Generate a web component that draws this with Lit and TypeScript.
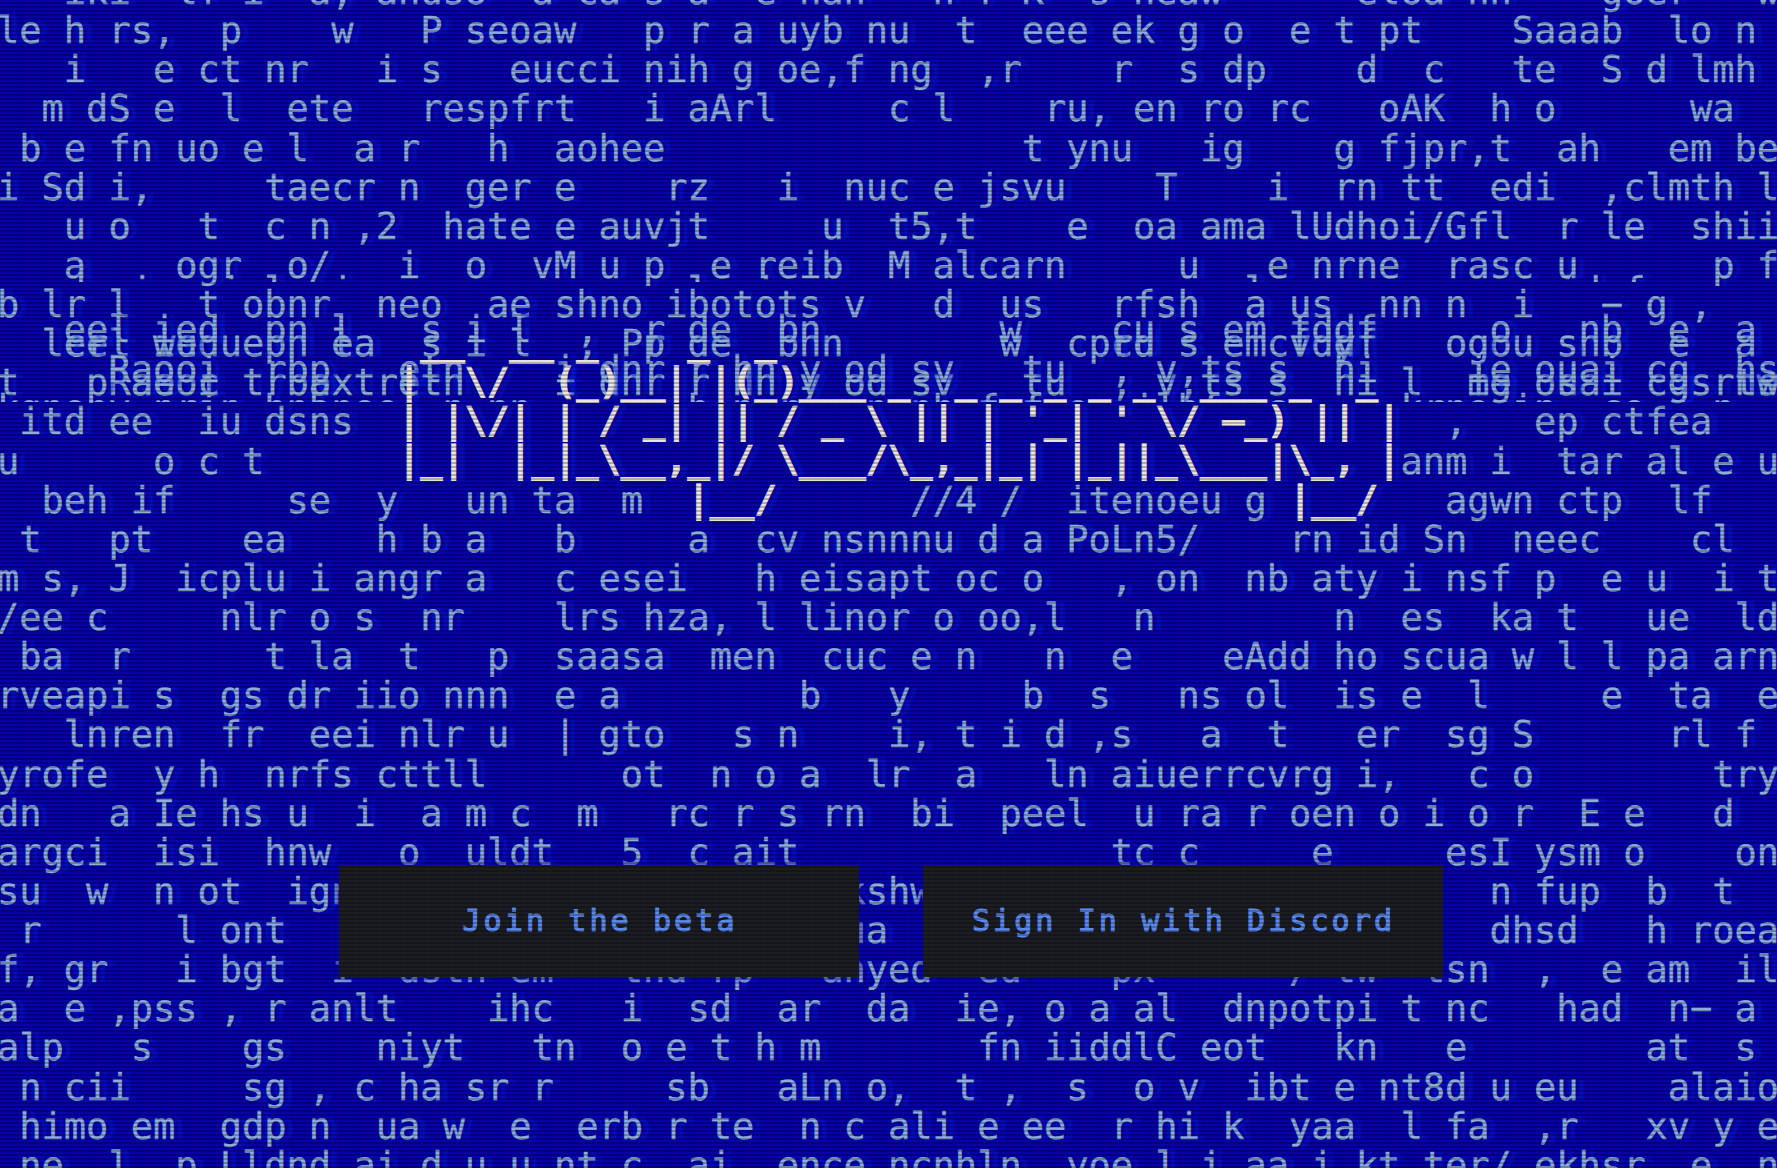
import { LitElement, html, css } from "lit";
import { customElement, property } from "lit/decorators.js";

type Token = [number, string];

/** Splits a "column:word column:word" description into its tokens. */
const parse = (source: string): Token[] =>
  source
    .trim()
    .split(/\s+/)
    .filter(Boolean)
    .map((part) => {
      const at = part.indexOf(":");
      return [Number(part.slice(0, at)), part.slice(at + 1)] as Token;
    });

/** Pads the tokens out to one fixed-width line. */
const compose = (source: string): string => {
  let line = "";
  for (const [col, word] of parse(source)) line = line.padEnd(col, " ") + word;
  return line;
};

const FIELD = [
  "3:iki 8:lf 11:i 14:a, 17:anuso 24:a 26:ca 29:s 31:a 34:e 36:nan 42:n 44:r 46:K 49:s 51:neaw 61:eloa 66:nn 72:goer 79:w",
  "0:le 3:h 5:rs, 10:p 15:w 19:P 21:seoaw 29:p 31:r 33:a 35:uyb 39:nu 43:t 46:eee 50:ek 53:g 55:o 58:e 60:t 62:pt 68:Saaab 75:lo 78:n",
  "3:i 7:e 9:ct 12:nr 17:i 19:s 23:eucci 29:nih 33:g 35:oe,f 40:ng 44:,r 50:r 53:s 55:dp 61:d 64:c 68:te 72:S 74:d 76:lmh",
  "2:m 4:dS 7:e 10:l 13:ete 19:respfrt 29:i 31:aArl 40:c 42:l 47:ru, 51:en 54:ro 57:rc 62:oAK 67:h 69:o 76:wa",
  "1:b 3:e 5:fn 8:uo 11:e 13:l 16:a 18:r 22:h 25:aohee 46:t 48:ynu 54:ig 60:g 62:fjpr,t 70:ah 75:em 78:be",
  "0:i 2:Sd 5:i, 12:taecr 18:n 21:ger 25:e 30:rz 35:i 38:nuc 42:e 44:jsvu 52:T 57:i 60:rn 63:tt 67:edi 72:,clmth 79:l",
  "3:u 5:o 9:t 12:c 14:n 16:,2 20:hate 25:e 27:auvjt 37:u 40:t5,t 48:e 51:oa 54:ama 58:lUdhoi/Gfl 70:r 72:le 76:shii",
  "3:a 8:ogr 13:o/ 18:i 21:o 24:vM 27:u 29:p 32:e 34:reib 40:M 42:alcarn 53:u 57:e 59:nrne 65:rasc 70:u 77:p 79:f",
  "0:b 2:lr 5:l 9:t 11:obnr 17:neo 22:ae 25:shno 30:ibotots 38:v 42:d 45:us 50:rfsh 56:a 58:us 62:nn 65:n 68:i 72:− 74:g 76:,",
  "2:lcr 7:wu 10:ue 15:ea 28:Pp 37:n 48:cprd 57:cv 60:y 65:og 68:u 70:s",
  "0:t 4:p 6:ae 9:c 11:t 14:axtre 63:l 66:mg 70:s 75:gsrtw",
  "1:itd 5:ee 9:iu 12:dsns 65:, 69:ep 72:ctfea",
  "0:u 7:o 9:c 11:t 63:anm 67:i 70:tar 74:al 77:e 79:u",
  "2:beh 6:if 13:se 17:y 21:un 24:ta 28:m 41://4 45:/ 48:itenoeu 56:g 65:agwn 70:ctp 75:lf",
  "1:t 5:pt 11:ea 17:h 19:b 21:a 25:b 31:a 34:cv 37:nsnnnu 44:d 46:a 48:PoLn5/ 58:rn 61:id 64:Sn 68:neec 76:cl",
  "0:m 2:s, 5:J 8:icplu 14:i 16:angr 21:a 25:c 27:esei 34:h 36:eisapt 43:oc 46:o 50:, 52:on 56:nb 59:aty 63:i 65:nsf 69:p 72:e 74:u 77:i 79:t",
  "0:/ee 4:c 10:nlr 14:o 16:s 19:nr 25:lrs 29:hza, 34:l 36:linor 42:o 44:oo,l 51:n 60:n 63:es 67:ka 70:t 74:ue 78:ld",
  "1:ba 5:r 12:t 14:la 18:t 22:p 25:saasa 32:men 37:cuc 41:e 43:n 47:n 50:e 55:eAdd 60:ho 63:scua 68:w 70:l 72:l 74:pa 77:arn",
  "0:rveapi 7:s 10:gs 13:dr 16:iio 20:nnn 25:e 27:a 36:b 40:y 46:b 49:s 53:ns 56:ol 60:is 63:e 66:l 72:e 75:ta 79:e",
  "3:lnren 10:fr 14:eei 18:nlr 22:u 25:| 27:gto 33:s 35:n 40:i, 43:t 45:i 47:d 49:,s 54:a 57:t 61:er 65:sg 68:S 75:rl 78:f",
  "0:yrofe 7:y 9:h 12:nrfs 17:cttll 28:ot 32:n 34:o 36:a 39:lr 43:a 47:ln 50:aiuerrcvrg 61:i, 66:c 68:o 77:try",
  "0:dn 5:a 7:Ie 10:hs 13:u 16:i 19:a 21:m 23:c 26:m 30:rc 33:r 35:s 37:rn 41:bi 45:peel 51:u 53:ra 56:r 58:oen 62:o 64:i 66:o 68:r 71:E 73:e 77:d",
  "0:argci 7:isi 12:hnw 18:o 21:uldt 28:5 31:c 33:ait 50:tc 53:c 59:e 65:esI 69:ysm 73:o 78:on",
  "0:su 4:w 7:n 9:ot 13:ign 38:kshw 67:n 69:fup 74:b 77:t",
  "1:r 8:l 10:ont 38:ua 67:dhsd 74:h 76:roea",
  "0:f, 3:gr 8:i 10:bgt 15:i 18:dsth 23:em 28:thd 32:rp 37:anyed 44:ed 50:px 58:/ 60:tw 64:tsn 69:, 72:e 74:am 78:il",
  "0:a 3:e 5:,pss 10:, 12:r 14:anlt 22:ihc 28:i 31:sd 35:ar 39:da 43:ie, 47:o 49:a 51:al 55:dnpotpi 63:t 65:nc 70:had 75:n− 78:a",
  "0:alp 6:s 11:gs 17:niyt 24:tn 28:o 30:e 32:t 34:h 36:m 44:fn 47:iiddlC 54:eot 60:kn 65:e 74:at 78:s",
  "1:n 3:cii 11:sg 14:, 16:c 18:ha 21:sr 24:r 30:sb 35:aLn 39:o, 43:t 45:, 48:s 51:o 53:v 56:ibt 60:e 62:nt8d 67:u 69:eu 75:alaio",
  "1:himo 6:em 10:gdp 14:n 17:ua 20:w 23:e 26:erb 30:r 32:te 36:n 38:c 40:ali 44:e 46:ee 50:r 52:hi 55:k 58:yaa 63:l 65:fa 69:,r 74:xv 77:y 79:e",
  "1:ne 5:l 8:p 10:Lldnd 16:ai 19:d 21:u 23:u 25:nt 28:c 31:ai 35:ence 40:ncnhln 48:yoe 52:l 54:i 56:aa 59:i 61:kt 64:ter/ 69:ekhsr 76:e 79:n",
].map(compose);

/* Lines of the falling layer; the first and last ones are cut by the layer's edges. */
const ECHO = [
  "0:e 2:ed 6:i 10:i 12:l 13:o 15:i 25:o 27:o 31:l 33:o 34:i 43:o 46:o 51:o 56:l 60:o 62:o 68:o 70:id 73:f 79:o",
  "3:eel 7:ied 12:pn 15:l 19:s 21:i 23:l 26:, 29:r 31:de 35:bn 45:w 50:cu 53:s 55:em 58:fddf 67:o 71:nb 75:e 78:a",
  "5:Raooi 12:rbp 18:etn 25:i 27:dnr 31:r 33:hn 36:y 38:od 41:sv 46:tu 50:, 52:v,ts 57:s 60:hi 66:ie 69:ouai 74:cg 78:hs",
  "0:kgnonv 7:nrin 12:bnonoe 20:n 22:nn 31:b 33:n 35:r 39:n 41:nb 44:f 46:fne 51:i 52:lbfs 57:s 63:krnonin 72:co 75:n 77:n",
].map(compose);

const LOGO = [
  "19:__ 23:__ 26:_ 31:_ 34:_",
  "18:| 21:\\/ 25:(_)__| 32:|(_)___ 40:_ 43:_ 45:_ 47:_ 49:_ 51:_ 54:___ 58:_ 61:_",
  "18:| 20:|\\/| 25:| 27:/ 29:_| 32:|| 35:/ 37:_ 39:\\ 41:|| 44:| 46:'_| 50:' 52:\\/ 55:–_) 59:|| 62:|",
  "18:|_| 23:|_|_\\__,_|/ 35:\\___/\\_,_|_| 48:|_||_\\___|\\_, 62:|",
  "31:|__/ 58:|__/",
].map(compose);

@customElement("glyph-lines")
class GlyphLines extends LitElement {
  @property({ attribute: false }) lines: string[] = [];

  static styles = css`
    :host {
      display: block;
    }
    .line {
      height: 39.13px;
      line-height: 39.13px;
      white-space: pre;
    }
  `;

  render() {
    return html`${this.lines.map((line) => html`<div class="line">${line}</div>`)}`;
  }
}

@customElement("app-root")
class AppRoot extends LitElement {
  static styles = css`
    :host {
      display: block;
      width: 100vw;
      height: 100vh;
      overflow: hidden;
    }
    .screen {
      position: relative;
      display: flow-root;
      width: 100%;
      height: 100%;
      overflow: hidden;
      background: #0500ab;
      color: #90b0de;
      font-family: "DejaVu Sans Mono", monospace;
      font-size: 37px;
      text-rendering: geometricPrecision;
      text-shadow: 8px 0 3px rgba(8, 28, 235, 0.5);
      -webkit-text-stroke: 0.4px currentColor;
    }
    .field {
      position: relative;
      margin: -28px 0 0 -3px;
    }
    .layer {
      position: absolute;
      left: -3px;
      right: 0;
      overflow: hidden;
    }
    .settled {
      top: 324.2px;
    }
    .falling-head {
      top: 268px;
      height: 14px;
    }
    .falling-head glyph-lines {
      margin-top: 3px;
    }
    .falling-body {
      top: 310.4px;
      height: 91.6px;
    }
    .logo {
      position: absolute;
      left: -3px;
      top: 323px;
      color: #f0e9e3;
      font-weight: 700;
      -webkit-text-stroke: 0.8px currentColor;
    }
    .actions {
      position: absolute;
      left: 339px;
      top: 864.5px;
      display: flex;
      gap: 63.5px;
    }
    .action {
      box-sizing: border-box;
      width: 520px;
      height: 112px;
      padding: 0 0 0 2px;
      border: 0;
      background: #1a1c22;
      color: #5d8cf2;
      box-shadow: 0 0 10px rgba(5, 0, 169, 0.9);
      font: 500 30px/112px "DejaVu Sans Mono", monospace;
      letter-spacing: 3.1px;
      text-shadow: none;
      text-align: center;
      -webkit-text-stroke: 1.1px #5d8cf2;
    }
    .scanlines {
      position: absolute;
      inset: 0;
      pointer-events: none;
      background:
        linear-gradient(rgba(18, 16, 16, 0) 50%, rgba(0, 0, 0, 0.25) 50%) 0 0 / 100% 4px,
        linear-gradient(90deg, rgba(255, 0, 0, 0.03), rgba(0, 255, 0, 0.01), rgba(0, 0, 255, 0.03)) 0 0 / 6px 100%;
    }
  `;

  render() {
    return html`
      <main class="screen">
        <div class="layer settled"><glyph-lines .lines=${ECHO.slice(1, 3)}></glyph-lines></div>
        <glyph-lines class="field" .lines=${FIELD}></glyph-lines>
        <div class="layer falling-head"><glyph-lines .lines=${ECHO.slice(0, 1)}></glyph-lines></div>
        <div class="layer falling-body"><glyph-lines .lines=${ECHO.slice(1)}></glyph-lines></div>
        <glyph-lines class="logo" .lines=${LOGO}></glyph-lines>
        <div class="actions">
          <button class="action">Join the beta</button>
          <button class="action">Sign In with Discord</button>
        </div>
        <div class="scanlines"></div>
      </main>
    `;
  }
}
